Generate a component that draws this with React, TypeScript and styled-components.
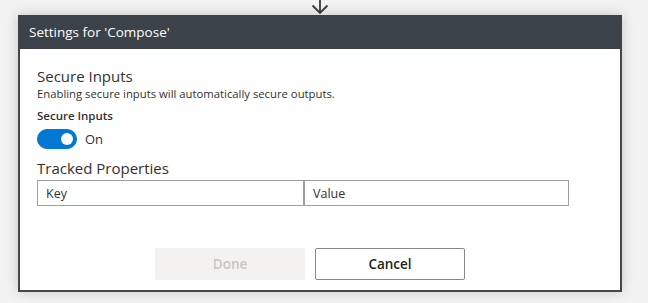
import styled, { createGlobalStyle } from "styled-components";

const GlobalStyle = createGlobalStyle`
  html, body {
    margin: 0;
    padding: 0;
    background: #f2f2f2;
    font-family: "Open Sans", "Noto Sans", sans-serif;
    color: #323130;
  }
`;

const Page = styled.div`
  width: 648px;
  height: 303px;
  padding-left: 18px;
  box-sizing: border-box;
  overflow: hidden;
`;

const Connector = styled.div`
  width: 604px;
  height: 15px;
  display: flex;
  justify-content: center;
  svg {
    display: block;
  }
`;

const Panel = styled.div`
  width: 604px;
  height: 277px;
  box-sizing: border-box;
  background: #fff;
  border: 2px solid #464646;
  border-top: none;
  box-shadow: 0 0 12px rgba(0, 0, 0, 0.18);
  display: flex;
  flex-direction: column;
`;

const Header = styled.div`
  height: 34px;
  margin: 0 -2px;
  padding-left: 11px;
  background: #3b4249;
  color: #fff;
  font-size: 13.5px;
  display: flex;
  align-items: center;
`;

const Body = styled.div`
  flex: 1;
  padding: 18px 17px 0;
  display: flex;
  flex-direction: column;
`;

const SectionTitle = styled.div<{ $gap?: number }>`
  font-size: 15px;
  line-height: 19px;
  color: #323130;
  margin-top: ${(p) => p.$gap ?? 0}px;
`;

const Description = styled.div`
  font-size: 11.3px;
  line-height: 16px;
  color: #323130;
`;

const FieldLabel = styled.div`
  font-size: 11.5px;
  font-weight: 600;
  line-height: 16px;
  margin-top: 6px;
`;

const ToggleRow = styled.div`
  display: flex;
  align-items: center;
  gap: 8px;
  margin-top: 5px;
  height: 20px;
`;

const Switch = styled.div<{ $on: boolean }>`
  width: 40px;
  height: 20px;
  border-radius: 10px;
  box-sizing: border-box;
  background: ${(p) => (p.$on ? "#0078d4" : "#fff")};
  border: 1px solid ${(p) => (p.$on ? "#0078d4" : "#605e5c")};
  display: flex;
  align-items: center;
  justify-content: ${(p) => (p.$on ? "flex-end" : "flex-start")};
  padding: 0 3px;
`;

const Knob = styled.span`
  width: 12px;
  height: 12px;
  border-radius: 50%;
  background: #fff;
`;

const ToggleText = styled.span`
  font-size: 13px;
  color: #323130;
`;

const Table = styled.div`
  display: grid;
  grid-template-columns: 265px 265px;
  width: 532px;
  margin-top: 2px;
  border: 1px solid #a19f9d;
  box-sizing: border-box;
`;

const Cell = styled.div<{ $first?: boolean }>`
  height: 24px;
  padding-left: 8px;
  display: flex;
  align-items: center;
  font-size: 12.5px;
  color: #323130;
  border-left: ${(p) => (p.$first ? "none" : "2px solid #a19f9d")};
`;

const Footer = styled.div`
  margin-top: auto;
  padding: 0 20px 10px 0;
  display: flex;
  justify-content: center;
  gap: 10px;
`;

const Button = styled.button<{ $disabled?: boolean }>`
  width: 150px;
  height: 32px;
  box-sizing: border-box;
  border-radius: 2px;
  font-family: "Open Sans", "Noto Sans", sans-serif;
  font-size: 13.5px;
  font-weight: 600;
  background: ${(p) => (p.$disabled ? "#f3f2f1" : "#fff")};
  color: ${(p) => (p.$disabled ? "#c8c6c4" : "#201f1e")};
  border: 1px solid ${(p) => (p.$disabled ? "#f3f2f1" : "#8a8886")};
`;

export default function App() {
  return (
    <>
      <GlobalStyle />
      <Page>
        <Connector>
          <svg width="20" height="15" viewBox="0 0 20 15">
            <path d="M10 0 V13 M2.5 5.5 L10 13 L17.5 5.5" fill="none" stroke="#3a3a3a" strokeWidth="1.8" />
          </svg>
        </Connector>
        <Panel>
          <Header>Settings for 'Compose'</Header>
          <Body>
            <SectionTitle>Secure Inputs</SectionTitle>
            <Description>Enabling secure inputs will automatically secure outputs.</Description>
            <FieldLabel>Secure Inputs</FieldLabel>
            <ToggleRow>
              <Switch $on>
                <Knob />
              </Switch>
              <ToggleText>On</ToggleText>
            </ToggleRow>
            <SectionTitle $gap={10}>Tracked Properties</SectionTitle>
            <Table>
              <Cell $first>Key</Cell>
              <Cell>Value</Cell>
            </Table>
          </Body>
          <Footer>
            <Button $disabled disabled>Done</Button>
            <Button>Cancel</Button>
          </Footer>
        </Panel>
      </Page>
    </>
  );
}
